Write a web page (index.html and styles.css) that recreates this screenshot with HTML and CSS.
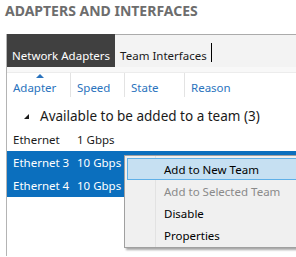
FILE: index.html
```html
<!DOCTYPE html>
<html lang="en">
<head>
    <meta charset="UTF-8">
    <meta name="viewport" content="width=device-width, initial-scale=1.0">
    <title>Adapters and Interfaces</title>
    <link rel="stylesheet" href="styles.css">
</head>
<body>
    <h2 class="section-title">ADAPTERS AND INTERFACES</h2>

    <div class="panel">
        <div class="tabs">
            <div class="tab active">Network Adapters</div>
            <div class="tab">Team Interfaces</div>
            <div class="caret"></div>
        </div>
        <div class="spacer"></div>

        <div class="grid-header">
            <div class="col col-adapter sorted">Adapter</div>
            <div class="col col-speed">Speed</div>
            <div class="col col-state">State</div>
            <div class="col col-reason">Reason</div>
        </div>

        <div class="group-row">
            <svg class="expander" width="5" height="5" viewBox="0 0 5 5"><polygon points="5,0 5,5 0,5" fill="#1a1a1a"/></svg>
            <span>Available to be added to a team (3)</span>
        </div>

        <div class="row">
            <div class="col col-adapter">Ethernet</div>
            <div class="col col-speed">1 Gbps</div>
        </div>
        <div class="row selected">
            <div class="col col-adapter">Ethernet 3</div>
            <div class="col col-speed">10 Gbps</div>
        </div>
        <div class="row selected">
            <div class="col col-adapter">Ethernet 4</div>
            <div class="col col-speed">10 Gbps</div>
        </div>
    </div>

    <div class="context-menu">
        <div class="menu-item hover">Add to New Team</div>
        <div class="menu-item disabled">Add to Selected Team</div>
        <div class="menu-item">Disable</div>
        <div class="menu-item">Properties</div>
    </div>
</body>
</html>
```

FILE: styles.css
```css
html {
    overflow: hidden;
}
body {
    font-family: "Segoe UI", "Noto Sans", sans-serif;
    font-size: 11.5px;
    background-color: #fff;
    color: #1a1a1a;
    margin: 0;
    height: 257px;
    overflow: hidden;
    position: relative;
}
.section-title {
    margin: 0;
    padding: 1px 0 0 5px;
    height: 34px;
    box-sizing: border-box;
    font-size: 14px;
    font-weight: bold;
    color: #6d6d6d;
}
.panel {
    margin-left: 6px;
    border-left: 1px solid #b4b4b4;
    height: 222px;
}
.tabs {
    display: flex;
    align-items: stretch;
    height: 33px;
    background-color: #f3f3f3;
    border-top: 1px solid #ababab;
    box-sizing: border-box;
}
.tab {
    display: flex;
    align-items: flex-end;
    padding: 0 4px 4px 5px;
    color: #1a1a1a;
    white-space: nowrap;
}
.tab.active {
    background-color: #404040;
    color: #fff;
    padding: 0 5px 4px 5px;
    margin-top: -1px;
}
.caret {
    width: 1px;
    height: 19px;
    background-color: #000;
    align-self: flex-end;
    margin: 0 0 5px 0;
}
.spacer {
    height: 5px;
    background-color: #f8f8f8;
}
.grid-header {
    display: flex;
    height: 24px;
    border-top: 1px solid #ececec;
    color: #2a73bd;
}
.grid-header .col {
    border-right: 1px solid #e3e3e3;
    padding-top: 7px;
}
.col {
    box-sizing: border-box;
    padding-left: 6px;
    white-space: nowrap;
}
.col-adapter {
    width: 64px;
}
.col-speed {
    width: 54px;
}
.col-state {
    width: 60px;
}
.col-reason {
    flex: 1;
    border-right: none !important;
}
.sorted {
    position: relative;
}
.sorted::before {
    content: "";
    position: absolute;
    left: 29px;
    top: 1px;
    border-left: 4px solid transparent;
    border-right: 4px solid transparent;
    border-bottom: 4px solid #2a73bd;
}
.group-row {
    display: flex;
    align-items: center;
    height: 31px;
    padding: 6px 0 0 17px;
    box-sizing: border-box;
    font-size: 13.5px;
    color: #1a1a1a;
    white-space: nowrap;
}
.expander {
    margin-right: 11px;
    margin-top: 1px;
}
.row {
    display: flex;
    align-items: center;
    height: 23px;
}
.row.selected {
    background-color: #0b6fbe;
    color: #fff;
}
.context-menu {
    position: absolute;
    left: 124px;
    top: 155px;
    right: -6px;
    padding: 2px 2px 1px 2px;
    background-color: #f0f0f0;
    border: 1px solid #a0a0a0;
    box-shadow: 2px 2px 2px rgba(0, 0, 0, 0.35);
    background-image: linear-gradient(#e2e2e2, #e2e2e2);
    background-size: 1px 100%;
    background-position: 30px 0;
    background-repeat: no-repeat;
}
.menu-item {
    height: 22px;
    line-height: 22px;
    padding-left: 36px;
    color: #000;
    border: 1px solid transparent;
    box-sizing: border-box;
    white-space: nowrap;
}
.menu-item.hover {
    background-color: #c6e0f2;
    border-color: #5fb0e8;
}
.menu-item.disabled {
    color: #8a8a8a;
}
```
